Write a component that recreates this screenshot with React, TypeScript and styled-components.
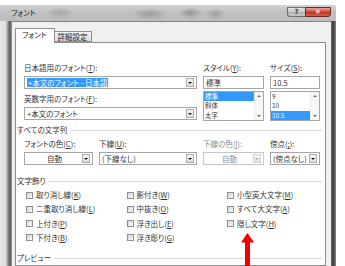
import React from "react";
import styled, { createGlobalStyle } from "styled-components";

const GlobalStyle = createGlobalStyle`
  * { box-sizing: border-box; }
  html, body { margin: 0; padding: 0; background: #ffffff; }
  body {
    font-family: "Noto Sans CJK JP", "Noto Sans", sans-serif;
    font-feature-settings: "palt" 1;
    font-size: 7.5px;
    color: #333;
  }
`;

const Page = styled.div`
  position: relative;
  width: 345px;
  height: 266px;
  overflow: hidden;
  background: #fff;
  padding-top: 5px;
`;

const Window = styled.div`
  width: 336px;
  height: 261px;
  display: flex;
  flex-direction: column;
  background: #c6c6c6;
`;

const TitleBar = styled.div`
  height: 16px;
  flex: none;
  display: flex;
  align-items: flex-start;
  padding: 0 5px 0 11px;
  background:
    radial-gradient(ellipse 14px 6px at 60px 8px, rgba(150,150,150,0.6), transparent),
    radial-gradient(ellipse 18px 6px at 150px 9px, rgba(130,130,130,0.6), transparent),
    radial-gradient(ellipse 12px 6px at 190px 8px, rgba(120,120,120,0.6), transparent),
    radial-gradient(ellipse 10px 6px at 215px 9px, rgba(140,140,140,0.6), transparent),
    linear-gradient(180deg, #d4d4d4 0%, #c2c2c2 40%, #bcbcbc 100%);
`;

const Title = styled.div`
  font-size: 7.5px;
  line-height: 16px;
  color: #1e1e1e;
`;

const CaptionButtons = styled.div`
  margin-left: auto;
  margin-top: 2px;
  display: flex;
`;

const HelpButton = styled.div`
  width: 18px;
  height: 10px;
  border: 1px solid #6f6f6f;
  border-right: none;
  border-radius: 0 0 0 3px;
  background: linear-gradient(180deg, #e4e4e4 0%, #c6c6c6 50%, #b2b2b2 51%, #c4c4c4 100%);
  color: #3a3a3a;
  font: bold 7px/8px "DejaVu Sans", sans-serif;
  display: flex;
  align-items: center;
  justify-content: center;
`;

const CloseButton = styled.div`
  width: 26px;
  height: 10px;
  border: 1px solid #6b2a22;
  border-radius: 0 0 3px 0;
  background: linear-gradient(180deg, #e9a596 0%, #d4513f 45%, #c1321f 55%, #d46248 100%);
  color: #fff;
  font: bold 7px/8px "DejaVu Sans", sans-serif;
  display: flex;
  align-items: center;
  justify-content: center;
`;

const Body = styled.div`
  flex: 1;
  display: flex;
  min-height: 0;
`;

const LeftFrame = styled.div`
  width: 12px;
  flex: none;
  background: linear-gradient(90deg, #e6e6e6 0px, #dcdcdc 6px, #8a8a8a 8px, #5a5a5a 10px, #9a9a9a 12px);
`;

const RightFrame = styled.div`
  width: 5px;
  flex: none;
  background: linear-gradient(90deg, #6d6d6d 0px, #3f3f3f 2px, #4a4a4a 3px, #8a8a8a 5px);
`;

const Client = styled.div`
  flex: 1;
  display: flex;
  flex-direction: column;
  background: #f0f0f0;
  border-top: 1px solid #858585;
  padding: 6px 5px 0 3px;
  min-width: 0;
`;

const TabRow = styled.div`
  height: 14px;
  flex: none;
  display: flex;
  align-items: flex-end;
`;

const Tab = styled.div<{ $active?: boolean }>`
  position: relative;
  z-index: ${(p) => (p.$active ? 1 : 0)};
  height: ${(p) => (p.$active ? "15px" : "11px")};
  margin-bottom: ${(p) => (p.$active ? "-1px" : "0")};
  padding: ${(p) => (p.$active ? "0 7px 0 6px" : "0 3px 0 3px")};
  border: 1px solid #8e8f8f;
  border-bottom: ${(p) => (p.$active ? "none" : "1px solid #8e8f8f")};
  border-left: ${(p) => (p.$active ? "1px solid #8e8f8f" : "none")};
  background: ${(p) =>
    p.$active ? "#ffffff" : "linear-gradient(180deg, #f3f3f3 0%, #ebebeb 50%, #dedede 51%, #e6e6e6 100%)"};
  font-size: 7.5px;
  line-height: ${(p) => (p.$active ? "12px" : "9px")};
  color: #222;
  white-space: nowrap;
`;

const Panel = styled.div`
  flex: 1;
  background: #fff;
  border: 1px solid #8e8f8f;
  padding-top: 20px;
  display: flex;
  flex-direction: column;
`;

const FontGrid = styled.div`
  display: grid;
  grid-template-columns: 173px 61px 50px;
  column-gap: 6px;
  margin-left: 8px;
`;

const Column = styled.div`
  display: flex;
  flex-direction: column;
`;

const Field = styled.div<{ $gap?: number; $top?: number }>`
  display: flex;
  flex-direction: column;
  gap: ${(p) => p.$gap ?? 3}px;
  margin-top: ${(p) => p.$top ?? 0}px;
`;

const Label = styled.div<{ $disabled?: boolean }>`
  height: 10px;
  font-size: 7.5px;
  line-height: 10px;
  color: ${(p) => (p.$disabled ? "#8c8c8c" : "#333")};
  white-space: nowrap;
`;

const Combo = styled.div<{ $disabled?: boolean }>`
  height: 13px;
  display: flex;
  align-items: center;
  padding: 0 2px 0 2px;
  border: 1px solid ${(p) => (p.$disabled ? "#c6c6c6" : "#a6a6a6")};
  background: #fff;
`;

const ComboText = styled.span<{ $center?: boolean; $disabled?: boolean }>`
  flex: 1;
  min-width: 0;
  font-size: 7.5px;
  line-height: 9px;
  text-align: ${(p) => (p.$center ? "center" : "left")};
  color: ${(p) => (p.$disabled ? "#8c8c8c" : "#333")};
  white-space: nowrap;
  overflow: hidden;
`;

const Selected = styled.span`
  background: #3399ff;
  color: #fff;
  padding: 0 1px;
`;

const DropButton = styled.div<{ $disabled?: boolean }>`
  width: 8px;
  height: 9px;
  flex: none;
  display: flex;
  align-items: center;
  justify-content: center;
  border: 1px solid ${(p) => (p.$disabled ? "#d4d4d4" : "#acacac")};
  background: linear-gradient(180deg, #f4f4f4 0%, #e2e2e2 100%);
  &::after {
    content: "";
    border-left: 2px solid transparent;
    border-right: 2px solid transparent;
    border-top: 2px solid ${(p) => (p.$disabled ? "#b4b4b4" : "#1a1a1a")};
  }
`;

const TextBox = styled.div`
  height: 13px;
  border: 1px solid #a6a6a6;
  background: #fff;
  padding-left: 2px;
  font-size: 7.5px;
  line-height: 11px;
  color: #333;
`;

const ListBox = styled.div`
  height: 30px;
  border: 1px solid #a6a6a6;
  background: #fff;
  display: flex;
`;

const ListItems = styled.div`
  flex: 1;
  display: flex;
  flex-direction: column;
`;

const ListItem = styled.div<{ $selected?: boolean }>`
  height: 9.33px;
  padding-left: 1px;
  font-size: 6.4px;
  line-height: 9.33px;
  background: ${(p) => (p.$selected ? "#3399ff" : "transparent")};
  color: ${(p) => (p.$selected ? "#fff" : "#333")};
`;

const ScrollBar = styled.div`
  width: 9px;
  flex: none;
  display: flex;
  flex-direction: column;
  justify-content: space-between;
  align-items: center;
  padding: 3px 0;
  background: #f7f7f7;
  border-left: 1px solid #ececec;
`;

const Arrow = styled.div<{ $up?: boolean }>`
  width: 0;
  height: 0;
  border-left: 2px solid transparent;
  border-right: 2px solid transparent;
  ${(p) => (p.$up ? "border-bottom: 2px solid #6a6a6a;" : "border-top: 2px solid #6a6a6a;")}
`;

const SectionHeader = styled.div<{ $top: number }>`
  display: flex;
  align-items: center;
  gap: 3px;
  height: 10px;
  margin: ${(p) => p.$top}px 3px 0 1px;
  font-size: 7.5px;
  line-height: 10px;
  color: #333;
  white-space: nowrap;
  &::after {
    content: "";
    flex: 1;
    height: 1px;
    background: #dadada;
  }
`;

const AttrGrid = styled.div`
  display: grid;
  grid-template-columns: 69px 98px 61px 50px;
  column-gap: 6px;
  margin: 4px 0 0 8px;
`;

const CheckGrid = styled.div`
  display: grid;
  grid-template-columns: 100.5px 100.5px auto;
  grid-template-rows: repeat(4, 14.25px);
  grid-auto-flow: column;
  margin: 2px 0 0 10px;
`;

const CheckItem = styled.label`
  display: flex;
  align-items: center;
  gap: 3px;
  font-size: 7.5px;
  line-height: 10px;
  color: #333;
  white-space: nowrap;
`;

const Box = styled.span`
  width: 7px;
  height: 7px;
  flex: none;
  border: 1px solid #8f8f8f;
  background: linear-gradient(135deg, #d6d6d6 0%, #eeeeee 70%, #f8f8f8 100%);
`;

const ArrowMark = styled.svg`
  position: absolute;
  left: 240px;
  top: 233px;
`;

const fontColumnLeft = (
  <Column>
    <Field>
      <Label>
        日本語用のフォント(<u>T</u>):
      </Label>
      <Combo>
        <ComboText>
          <Selected>+本文のフォント - 日本語</Selected>
        </ComboText>
        <DropButton />
      </Combo>
    </Field>
    <Field $top={5}>
      <Label>
        英数字用のフォント(<u>F</u>):
      </Label>
      <Combo>
        <ComboText>+本文のフォント</ComboText>
        <DropButton />
      </Combo>
    </Field>
  </Column>
);

type ListProps = { label: React.ReactNode; value: string; items: string[]; selected: number };

function PickList({ label, value, items, selected }: ListProps) {
  return (
    <Column>
      <Field>
        <Label>{label}</Label>
        <TextBox>{value}</TextBox>
      </Field>
      <Field $top={2}>
        <ListBox>
          <ListItems>
            {items.map((it, i) => (
              <ListItem key={it} $selected={i === selected}>
                {it}
              </ListItem>
            ))}
          </ListItems>
          <ScrollBar>
            <Arrow $up />
            <Arrow />
          </ScrollBar>
        </ListBox>
      </Field>
    </Column>
  );
}

const checks: React.ReactNode[] = [
  <>取り消し線(<u>K</u>)</>,
  <>二重取り消し線(<u>L</u>)</>,
  <>上付き(<u>P</u>)</>,
  <>下付き(<u>B</u>)</>,
  <>影付き(<u>W</u>)</>,
  <>中抜き(<u>O</u>)</>,
  <>浮き出し(<u>E</u>)</>,
  <>浮き彫り(<u>G</u>)</>,
  <>小型英大文字(<u>M</u>)</>,
  <>すべて大文字(<u>A</u>)</>,
  <>隠し文字(<u>H</u>)</>,
];

export default function App() {
  return (
    <Page>
      <GlobalStyle />
      <Window>
        <TitleBar>
          <Title>フォント</Title>
          <CaptionButtons>
            <HelpButton>?</HelpButton>
            <CloseButton>✕</CloseButton>
          </CaptionButtons>
        </TitleBar>
        <Body>
          <LeftFrame />
          <Client>
            <TabRow>
              <Tab $active>フォント</Tab>
              <Tab>詳細設定</Tab>
            </TabRow>
            <Panel>
              <FontGrid>
                {fontColumnLeft}
                <PickList
                  label={<>スタイル(<u>Y</u>):</>}
                  value="標準"
                  items={["標準", "斜体", "太字"]}
                  selected={0}
                />
                <PickList
                  label={<>サイズ(<u>S</u>):</>}
                  value="10.5"
                  items={["9", "10", "10.5"]}
                  selected={2}
                />
              </FontGrid>

              <SectionHeader $top={4}>すべての文字列</SectionHeader>
              <AttrGrid>
                <Field>
                  <Label>
                    フォントの色(<u>C</u>):
                  </Label>
                  <Combo>
                    <ComboText $center>自動</ComboText>
                    <DropButton />
                  </Combo>
                </Field>
                <Field>
                  <Label>
                    下線(<u>U</u>):
                  </Label>
                  <Combo>
                    <ComboText>(下線なし)</ComboText>
                    <DropButton />
                  </Combo>
                </Field>
                <Field>
                  <Label $disabled>
                    下線の色(<u>I</u>):
                  </Label>
                  <Combo $disabled>
                    <ComboText $center $disabled>
                      自動
                    </ComboText>
                    <DropButton $disabled />
                  </Combo>
                </Field>
                <Field>
                  <Label>
                    傍点(<u>;</u>):
                  </Label>
                  <Combo>
                    <ComboText>(傍点なし)</ComboText>
                    <DropButton />
                  </Combo>
                </Field>
              </AttrGrid>

              <SectionHeader $top={11}>文字飾り</SectionHeader>
              <CheckGrid>
                {checks.map((c, i) => (
                  <CheckItem key={i}>
                    <Box />
                    <span>{c}</span>
                  </CheckItem>
                ))}
              </CheckGrid>

              <SectionHeader $top={8}>プレビュー</SectionHeader>
            </Panel>
          </Client>
          <RightFrame />
        </Body>
      </Window>
      <ArrowMark width="15" height="33" viewBox="0 0 15 33">
        <polygon points="7.5,0 1,9.5 14,9.5" fill="#f00000" />
        <rect x="5" y="9" width="5" height="24" fill="#f00000" />
      </ArrowMark>
    </Page>
  );
}
